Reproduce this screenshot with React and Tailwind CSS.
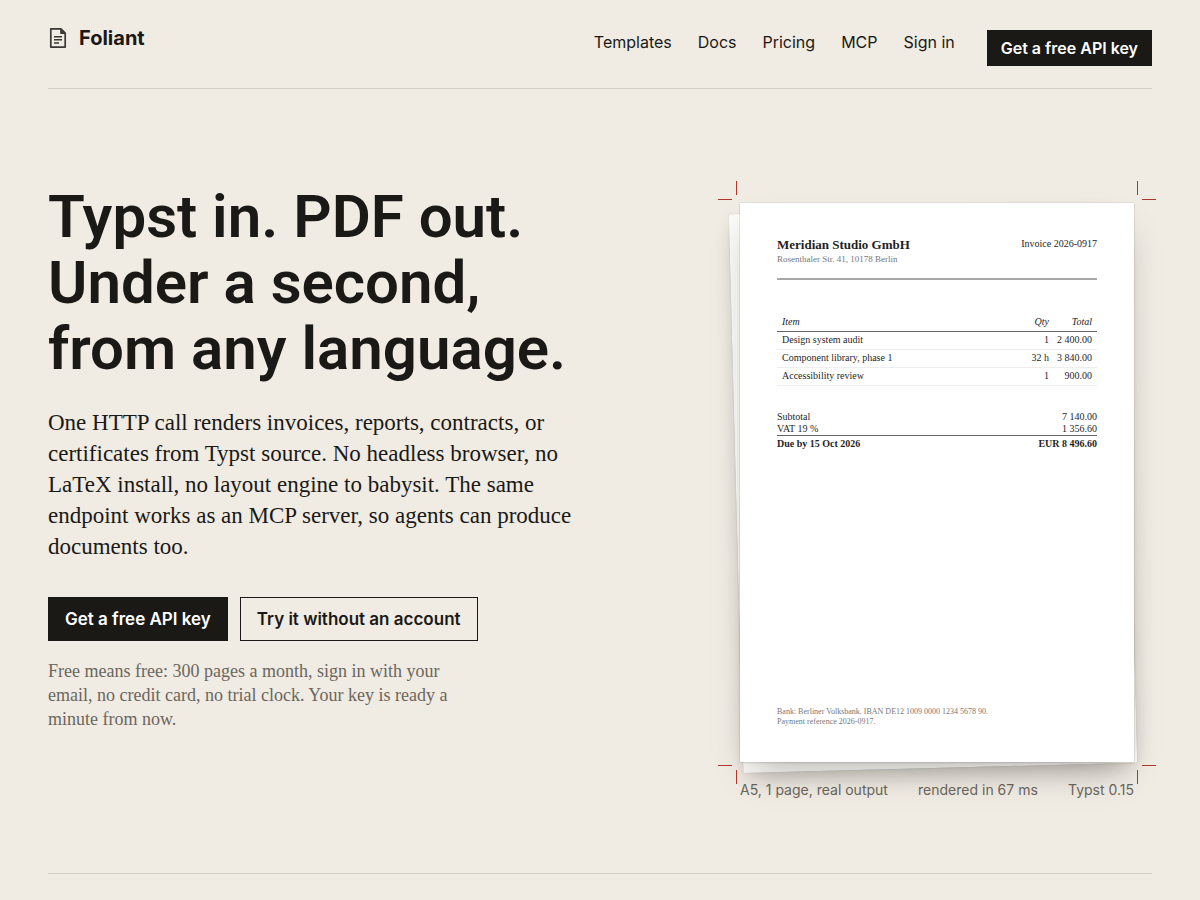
import React from "react";

const navLinks = ["Templates", "Docs", "Pricing", "MCP", "Sign in"];

const items = [
  { name: "Design system audit", qty: "1", total: "2 400.00" },
  { name: "Component library, phase 1", qty: "32 h", total: "3 840.00" },
  { name: "Accessibility review", qty: "1", total: "900.00" },
];

const LogoIcon = () => (
  <svg width="20" height="22" viewBox="0 0 20 22" fill="none" aria-hidden="true">
    <path
      d="M2.8 1.9H13L17.2 6.1V20.1H2.8Z"
      stroke="#3b3935"
      strokeWidth="1.7"
      strokeLinejoin="round"
    />
    <path d="M12.2 1.6V6.9H17.6Z" fill="#3b3935" />
    <path d="M6 9.7H14M6 12.8H14M6 15.9H11" stroke="#3b3935" strokeWidth="1.5" />
  </svg>
);

const Header = () => (
  <header className="flex items-start justify-between border-b border-[#d5d0c7] pt-6 pb-[22px]">
    <a href="#" className="flex items-center gap-[11px] text-xl leading-7 font-bold">
      <LogoIcon />
      Foliant
    </a>
    <nav className="mt-1.5 flex items-start gap-8">
      <div className="flex gap-[26px] text-base leading-6">
        {navLinks.map((label) => (
          <a key={label} href="#">
            {label}
          </a>
        ))}
      </div>
      <a
        href="#"
        className="flex h-9 items-center bg-[#1a1916] px-3.5 text-base leading-5 font-semibold text-white"
      >
        Get a free API key
      </a>
    </nav>
  </header>
);

const CropMarks = () => (
  <div className="pointer-events-none absolute -inset-[22px]" aria-hidden="true">
    <span className="absolute top-0 left-[18px] h-3.5 w-px bg-[#b0352a]" />
    <span className="absolute top-[18px] left-0 h-px w-3.5 bg-[#b0352a]" />
    <span className="absolute top-0 right-[18px] h-3.5 w-px bg-[#b0352a]" />
    <span className="absolute top-[18px] right-0 h-px w-3.5 bg-[#b0352a]" />
    <span className="absolute bottom-0 left-[18px] h-3.5 w-px bg-[#b0352a]" />
    <span className="absolute bottom-[18px] left-0 h-px w-3.5 bg-[#b0352a]" />
    <span className="absolute right-[18px] bottom-0 h-3.5 w-px bg-[#b0352a]" />
    <span className="absolute right-0 bottom-[18px] h-px w-3.5 bg-[#b0352a]" />
  </div>
);

const Invoice = () => (
  <div className="relative flex aspect-[148/210] flex-col bg-white px-[37px] pt-[34px] pb-[35px] font-['Liberation_Serif',serif] text-[10px] leading-3 text-[#1f1f1f] shadow-[0_0_1px_rgba(26,25,22,0.3),0_1px_2px_rgba(26,25,22,0.1),0_18px_36px_-14px_rgba(26,25,22,0.35)]">
    <div className="flex items-start justify-between border-b-2 border-[#a8a8a8] pb-[13px]">
      <div>
        <p className="text-[13px] leading-4 font-bold">Meridian Studio GmbH</p>
        <p className="text-[9px] leading-3 text-[#777]">Rosenthaler Str. 41, 10178 Berlin</p>
      </div>
      <p className="pt-px">Invoice 2026-0917</p>
    </div>

    <table className="mt-[33px] w-full border-collapse">
      <thead>
        <tr className="h-[18px] border-b border-[#666] italic">
          <th className="pl-[5px] text-left font-normal">Item</th>
          <th className="text-right font-normal">Qty</th>
          <th className="w-[48px] pr-[5px] text-right font-normal">Total</th>
        </tr>
      </thead>
      <tbody>
        {items.map((item) => (
          <tr key={item.name} className="h-[18px] border-b border-[#eee]">
            <td className="pl-[5px]">{item.name}</td>
            <td className="text-right">{item.qty}</td>
            <td className="pr-[5px] text-right">{item.total}</td>
          </tr>
        ))}
      </tbody>
    </table>

    <table className="mt-[25px] w-full border-collapse">
      <tbody>
        <tr>
          <td>Subtotal</td>
          <td className="text-right">7 140.00</td>
        </tr>
        <tr>
          <td>VAT 19 %</td>
          <td className="text-right">1 356.60</td>
        </tr>
        <tr className="h-[18px] border-t border-[#666] font-bold">
          <td>Due by 15 Oct 2026</td>
          <td className="text-right">EUR 8 496.60</td>
        </tr>
      </tbody>
    </table>

    <p className="mt-auto text-[8px] leading-[10px] text-[#777]">
      Bank: Berliner Volksbank. IBAN DE12 1009 0000 1234 5678 90.
      <br />
      Payment reference 2026-0917.
    </p>
  </div>
);

const Hero = () => (
  <section className="flex items-start justify-between gap-12 border-b border-[#d5d0c7] pt-[95px] pb-[73px]">
    <div className="max-w-[560px]">
      <h1 className="font-['Roboto',sans-serif] text-[60px] leading-[66px] font-semibold">
        Typst in. PDF out.
        <br />
        Under a second,
        <br />
        from any language.
      </h1>
      <p className="mt-[25px] max-w-[540px] font-['Liberation_Serif',serif] text-[23px] leading-[31px]">
        One HTTP call renders invoices, reports, contracts, or certificates from
        Typst source. No headless browser, no LaTeX install, no layout engine to
        babysit. The same endpoint works as an MCP server, so agents can produce
        documents too.
      </p>
      <div className="mt-[35px] flex gap-3 text-[17px] leading-6 font-semibold">
        <button className="h-11 border border-[#1a1916] bg-[#1a1916] px-4 text-white">
          Get a free API key
        </button>
        <button className="h-11 border border-[#1a1916] px-4">
          Try it without an account
        </button>
      </div>
      <p className="mt-[18px] max-w-[430px] font-['Liberation_Serif',serif] text-lg leading-6 text-[#6b675e]">
        Free means free: 300 pages a month, sign in with your email, no credit
        card, no trial clock. Your key is ready a minute from now.
      </p>
    </div>

    <figure className="mt-[19px] mr-[18px] w-[394px] shrink-0">
      <div className="relative">
        <div className="absolute inset-0 -translate-x-1 translate-y-1.5 -rotate-[1.5deg] bg-[#fcfaf6] shadow-[0_0_1px_rgba(26,25,22,0.3),0_8px_20px_-6px_rgba(26,25,22,0.2)]" />
        <Invoice />
        <CropMarks />
      </div>
      <figcaption className="mt-[18px] flex justify-between text-sm leading-5 text-[#6b675e]">
        <span>A5, 1 page, real output</span>
        <span>rendered in 67 ms</span>
        <span>Typst 0.15</span>
      </figcaption>
    </figure>
  </section>
);

export default function App() {
  return (
    <div className="min-h-screen bg-[#f0ebe3] px-12 font-['Inter',sans-serif] text-[#1a1916]">
      <Header />
      <Hero />
    </div>
  );
}
